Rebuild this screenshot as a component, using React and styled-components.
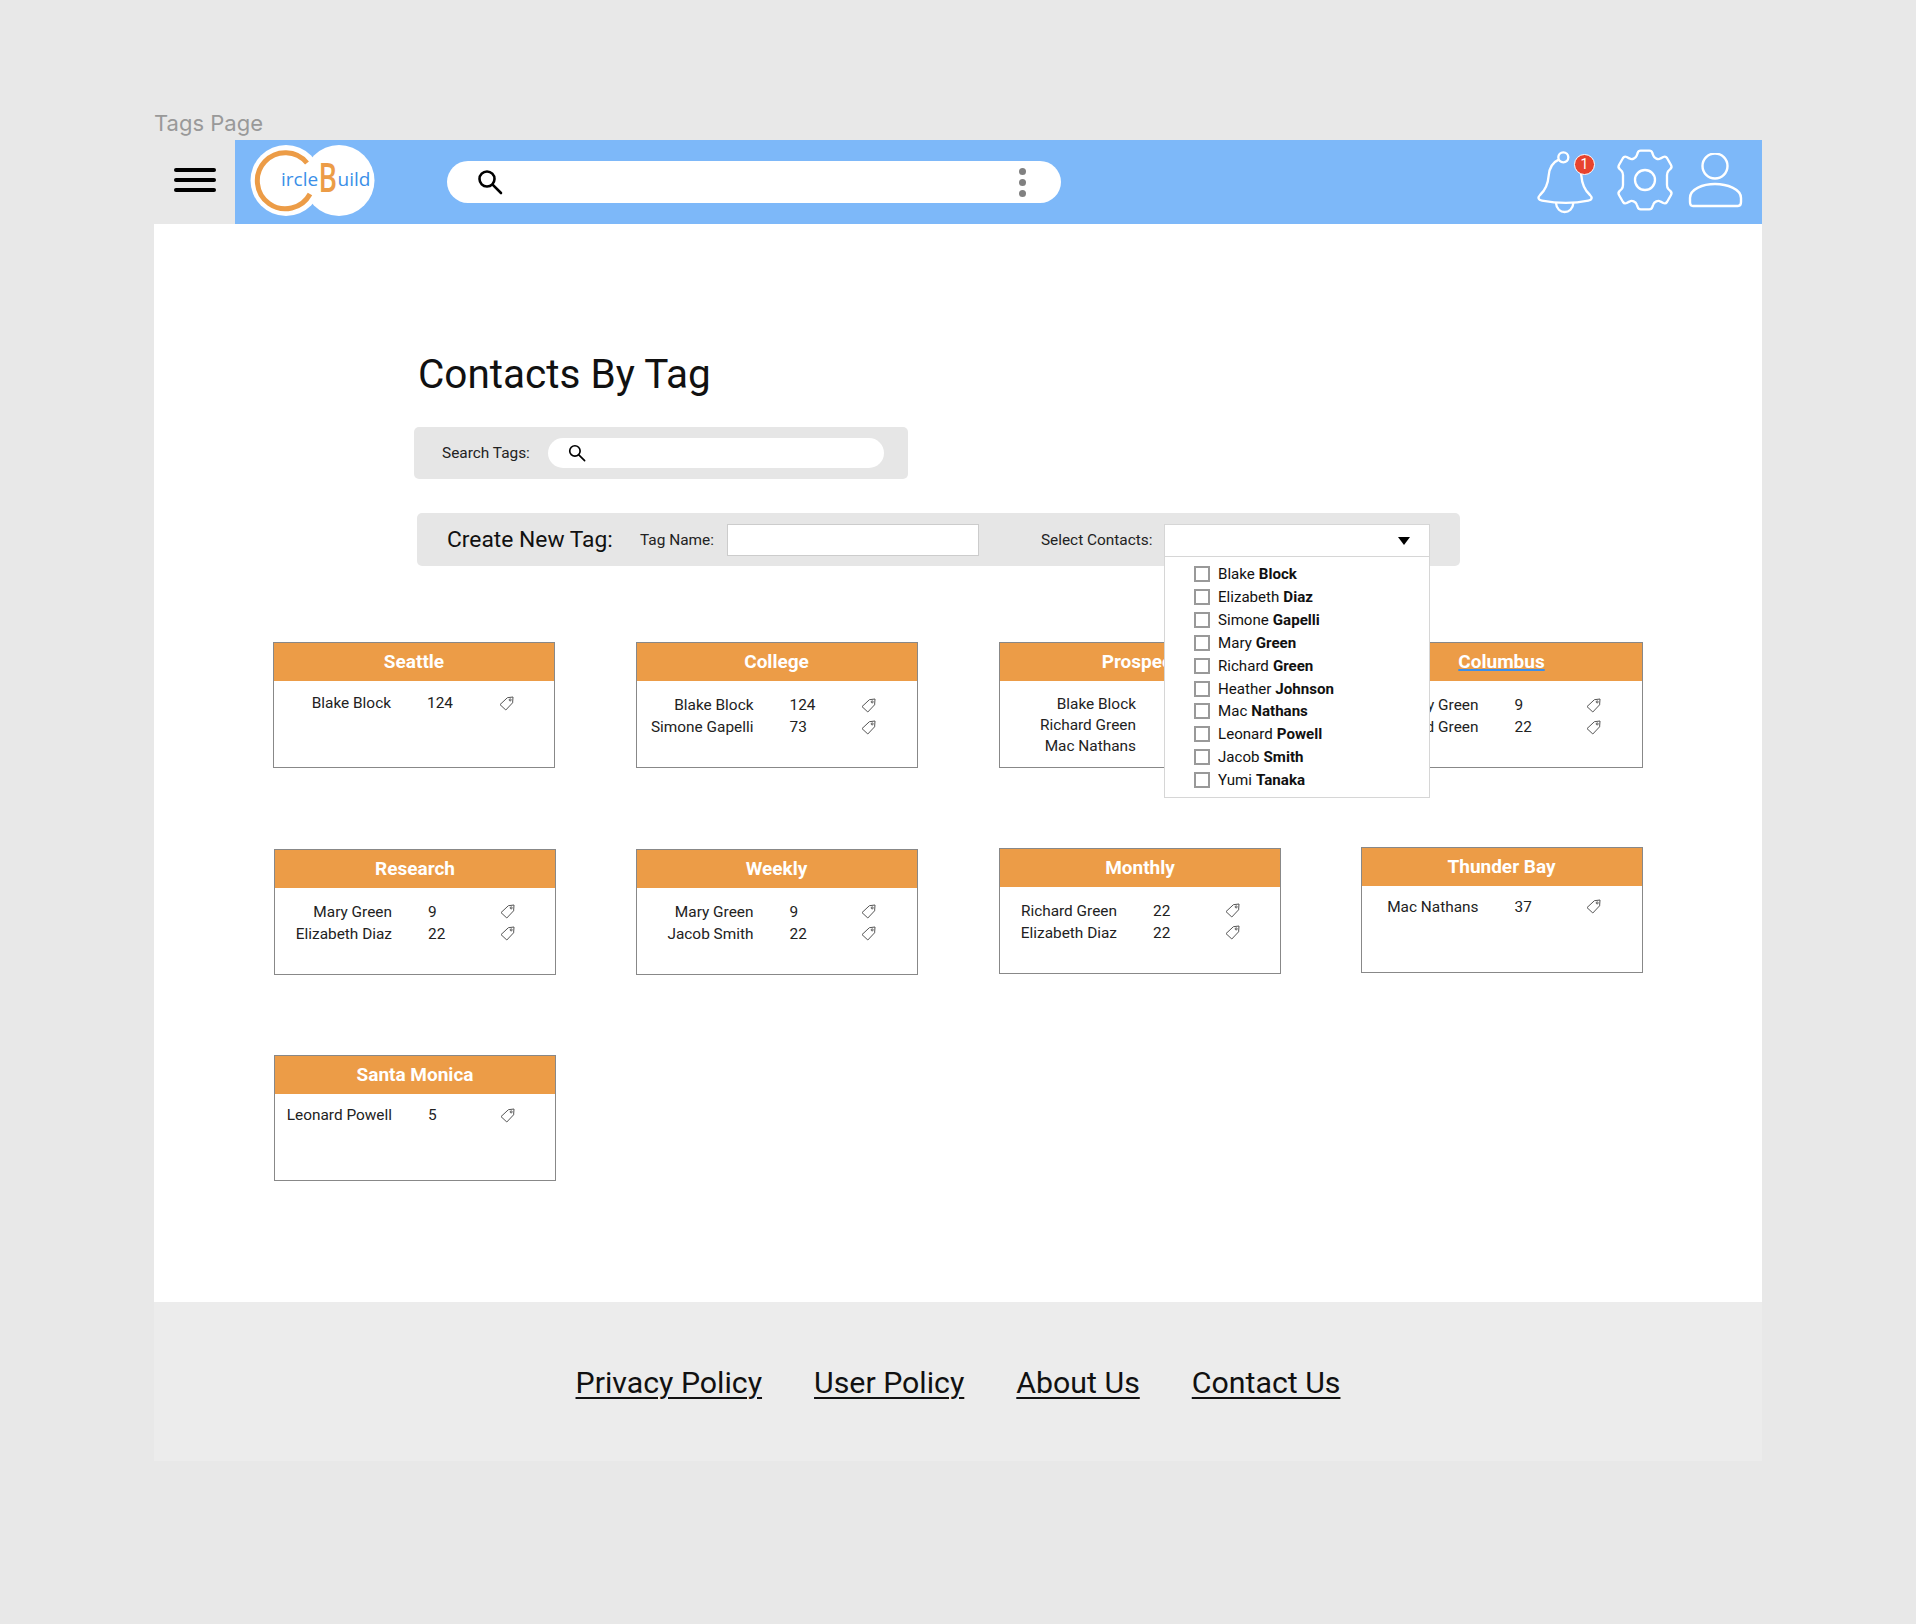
import React from "react";
import styled, { createGlobalStyle } from "styled-components";

const GlobalStyle = createGlobalStyle`
  html, body {
    margin: 0;
    padding: 0;
    background: #e8e8e8;
    font-family: Roboto, "Liberation Sans", sans-serif;
    color: #111;
  }
`;

const Page = styled.div`
  width: 1916px;
  height: 1624px;
  padding: 108px 154px 0;
  box-sizing: border-box;
`;

const PageLabel = styled.div`
  font-family: Inter, sans-serif;
  font-size: 22px;
  line-height: 31px;
  height: 32px;
  color: #999;
`;

const Frame = styled.div`
  width: 1608px;
  position: relative;
`;

const NavBar = styled.div`
  display: flex;
  height: 84px;
`;

const MenuCell = styled.div`
  width: 81px;
  display: flex;
  flex-direction: column;
  justify-content: center;
  align-items: center;
  gap: 6px;
  padding-bottom: 4px;
  box-sizing: border-box;
  background: #e8e8e8;
`;

const MenuBar = styled.span`
  display: block;
  width: 42px;
  height: 4px;
  border-radius: 2px;
  background: #000;
`;

const BlueBar = styled.div`
  flex: 1;
  display: flex;
  align-items: center;
  background: #7db8f9;
  padding-left: 15px;
`;

const LogoSvg = styled.svg`
  margin-top: -3px;
  flex-shrink: 0;
`;

const NavSearch = styled.div`
  width: 614px;
  height: 42px;
  margin-left: 72px;
  border-radius: 21px;
  background: #fff;
  display: flex;
  align-items: center;
  justify-content: space-between;
  padding: 0 35px 0 30px;
  box-sizing: border-box;
`;

const Kebab = styled.div`
  display: flex;
  flex-direction: column;
  gap: 4px;
`;

const KebabDot = styled.span`
  width: 7px;
  height: 7px;
  border-radius: 50%;
  background: #808080;
`;

const NavIcons = styled.div`
  margin-left: auto;
  display: flex;
  align-items: center;
  padding-right: 18px;
  gap: 13px;
`;

const BellWrap = styled.div`
  position: relative;
  width: 62px;
  height: 64px;
  margin-right: 5px;
`;

const Badge = styled.span`
  position: absolute;
  top: 4px;
  right: 2px;
  width: 21px;
  height: 21px;
  box-sizing: border-box;
  border: 1px solid #fff;
  border-radius: 50%;
  background: #e8432e;
  color: #fff;
  font-size: 14px;
  line-height: 19px;
  text-align: center;
`;

const Content = styled.main`
  height: 1078px;
  background: #fff;
  padding: 126px 0 0 119px;
  box-sizing: border-box;
`;

const Title = styled.h1`
  margin: 0 0 0 145px;
  font-size: 40.5px;
  font-weight: 400;
  line-height: 48px;
`;

const SearchPanel = styled.div`
  width: 494px;
  height: 52px;
  margin: 29px 0 0 141px;
  background: #e6e6e6;
  border-radius: 5px;
  display: flex;
  align-items: center;
  padding-left: 28px;
  box-sizing: border-box;
`;

const SmallLabel = styled.span`
  font-size: 15.4px;
  color: #222;
`;

const TagSearch = styled.div`
  width: 336px;
  height: 30px;
  margin-left: 18px;
  border-radius: 15px;
  background: #fff;
  display: flex;
  align-items: center;
  padding-left: 20px;
  box-sizing: border-box;
`;

const CreatePanel = styled.div`
  position: relative;
  width: 1043px;
  height: 53px;
  margin: 34px 0 0 144px;
  background: #e6e6e6;
  border-radius: 5px;
  display: flex;
  align-items: center;
  padding-left: 30px;
  box-sizing: border-box;
`;

const CreateLabel = styled.span`
  font-size: 22.8px;
  width: 193px;
  color: #111;
`;

const NameInput = styled.div`
  width: 252px;
  height: 32px;
  margin: 0 62px 0 13px;
  background: #fff;
  border: 1px solid #ccc;
  box-sizing: border-box;
`;

const Dropdown = styled.div`
  position: absolute;
  z-index: 2;
  left: 747px;
  top: 11px;
  width: 266px;
  background: #fff;
  border: 1px solid #d6d6d6;
  box-sizing: border-box;
`;

const DropHead = styled.div`
  height: 31px;
  border-bottom: 1px solid #d6d6d6;
  display: flex;
  align-items: center;
  justify-content: flex-end;
  padding-right: 19px;
`;

const Caret = styled.span`
  width: 0;
  height: 0;
  border-left: 6px solid transparent;
  border-right: 6px solid transparent;
  border-top: 8px solid #000;
`;

const DropList = styled.div`
  padding: 6px 0 6px 28.5px;
`;

const DropItem = styled.div`
  height: 22.85px;
  display: flex;
  align-items: center;
  font-size: 15.1px;
  color: #111;
  b {
    font-weight: 700;
    margin-left: 4px;
  }
`;

const CheckBox = styled.span`
  width: 16px;
  height: 16px;
  margin-right: 8.5px;
  border: 2px solid #999;
  box-sizing: border-box;
`;

const CardGrid = styled.div`
  margin-top: 76px;
  display: grid;
  grid-template-columns: repeat(4, 282px);
  column-gap: 80.5px;
  row-gap: 80.5px;
`;

const Card = styled.section`
  height: 126px;
  border: 1px solid #888;
  box-sizing: border-box;
  margin-top: ${(p) => p.$shift || 0}px;
  transform: translateX(${(p) => p.$nudge || 0}px);
  background: #fff;
`;

const CardHead = styled.div`
  height: 38px;
  background: #ec9c47;
  color: #fff;
  font-size: 19px;
  font-weight: 700;
  line-height: 38.5px;
  text-align: center;
`;

const Misspelt = styled.span`
  text-decoration: underline #3b8fe8 2px;
  text-underline-offset: 1px;
  text-decoration-skip-ink: none;
`;

const CardBody = styled.div`
  padding-top: ${(p) => p.$top}px;
  padding-left: ${(p) => p.$indent || 0}px;
`;

const CardRow = styled.div`
  height: ${(p) => p.$pitch}px;
  display: grid;
  grid-template-columns: 117px 36px 71.5px 15px;
  align-items: center;
  font-size: 15.4px;
  color: #222;
`;

const RowName = styled.span`
  text-align: right;
  white-space: nowrap;
  direction: rtl;
`;

const RowCount = styled.span`
  grid-column: 3;
`;

const Footer = styled.footer`
  height: 159px;
  padding-top: 1px;
  box-sizing: border-box;
  background: #ececec;
  display: flex;
  align-items: center;
  justify-content: center;
  gap: 52px;
`;

const FootLink = styled.a`
  font-size: 30.3px;
  color: #111;
  text-decoration: underline;
  text-underline-offset: 4px;
  text-decoration-thickness: 2px;
`;

const SearchIcon = ({ size, width }) => (
  <svg width={size} height={size} viewBox="0 0 26 26" fill="none" stroke="#000" strokeWidth={width}>
    <circle cx="10" cy="10" r="7.5" />
    <path d="M15.6 15.6 L24 24" strokeLinecap="round" />
  </svg>
);

const TagIcon = () => (
  <svg width="15" height="15" viewBox="0 0 15 15" fill="none" stroke="#555" strokeWidth="1" strokeLinejoin="round">
    <path d="M1 8.6 L8.4 1.7 L14 1 L13.6 6.8 L6.8 14 Z" />
    <circle cx="11.2" cy="3.9" r="1" />
  </svg>
);

const Logo = () => (
  <LogoSvg width="125" height="71" viewBox="0 0 125 71">
    <circle cx="36" cy="35.5" r="35.5" fill="#fff" />
    <circle cx="89" cy="35.5" r="35.5" fill="#fff" />
    <path d="M57 18 A28 28 0 1 0 60 49" fill="none" stroke="#ec9c47" strokeWidth="5" />
    <text x="31" y="41" fontFamily="Open Sans, sans-serif" fontSize="19" fill="#3b8fe8">ircle</text>
    <text transform="translate(68.5 47) scale(0.72 1)" fontFamily="Open Sans, sans-serif" fontSize="39" fontWeight="600" fill="#ec9c47">B</text>
    <text x="87.500" y="41" fontFamily="Open Sans, sans-serif" fontSize="19" fill="#3b8fe8">uild</text>
  </LogoSvg>
);

const BellIcon = () => (
  <svg width="62" height="64" viewBox="15 15 186 192" fill="none" stroke="#fff" strokeWidth="7" strokeLinejoin="round">
    <circle cx="100" cy="37" r="15" />
    <path d="M86 44 C68 52 58 70 56 92 C54 118 46 136 30 150 C22 158 25 165 36 167 C80 175 135 175 175 167 C186 165 188 158 180 150 C164 136 156 118 154 92 C153 78 149 66 142 56" />
    <path d="M78 174 C80 210 128 210 130 174" />
  </svg>
);

const UserIcon = () => (
  <svg width="56" height="58" viewBox="0 0 56 58" fill="none" stroke="#fff" strokeWidth="2.4">
    <circle cx="27" cy="13" r="12.5" />
    <path d="M2 45 C2 36 15 31 27 31 C39 31 53 36 53 45 L53 49 Q53 53 50 53 L5 53 Q2 53 2 49 Z" />
  </svg>
);

const GearIcon = () => (
  <svg width="60" height="60" viewBox="15 21 180 180" overflow="visible" fill="none" stroke="#fff" strokeWidth="7" strokeLinejoin="round">
    <path d="M92 17 L118 17 Q125 17 127 24 L130 32 Q132 38 139 41 Q146 44 152 40 L160 36 Q167 33 171 39 L183 60 Q187 67 181 72 L175 78 Q171 83 171 90 L171 120 Q171 127 175 132 L181 138 Q187 143 183 150 L171 171 Q167 177 160 174 L152 170 Q146 166 139 169 Q132 172 130 178 L127 186 Q125 193 118 193 L92 193 Q85 193 83 186 L80 178 Q78 172 71 169 Q64 166 58 170 L50 174 Q43 177 39 171 L27 150 Q23 143 29 138 L35 132 Q39 127 39 120 L39 90 Q39 83 35 78 L29 72 Q23 67 27 60 L39 39 Q43 33 50 36 L58 40 Q64 44 71 41 Q78 38 80 32 L83 24 Q85 17 92 17 Z" />
    <circle cx="105" cy="105" r="30" />
  </svg>
);

const cards = [
  { name: "Seattle", top: 11, pitch: 22, rows: [["Blake Block", "124"]] },
  { name: "College", top: 13, pitch: 22, rows: [["Blake Block", "124"], ["Simone Gapelli", "73"]] },
  { name: "Prospect", top: 12, pitch: 21, indent: 19, nudge: 1, rows: [["Blake Block", "124"], ["Richard Green", "22"], ["Mac Nathans", "37"]] },
  { name: "Columbus", top: 13, pitch: 22, misspelt: true, rows: [["Mary Green", "9"], ["Richard Green", "22"]] },
  { name: "Research", top: 13, pitch: 22, nudge: 1, rows: [["Mary Green", "9"], ["Elizabeth Diaz", "22"]] },
  { name: "Weekly", top: 13, pitch: 22, rows: [["Mary Green", "9"], ["Jacob Smith", "22"]] },
  { name: "Monthly", top: 13, pitch: 22, shift: -1, nudge: 1, rows: [["Richard Green", "22"], ["Elizabeth Diaz", "22"]] },
  { name: "Thunder Bay", top: 10, pitch: 22, shift: -2, rows: [["Mac Nathans", "37"]] },
  { name: "Santa Monica", top: 10, pitch: 22, nudge: 1, rows: [["Leonard Powell", "5"]] },
];

const contacts = [
  ["Blake", "Block"],
  ["Elizabeth", "Diaz"],
  ["Simone", "Gapelli"],
  ["Mary", "Green"],
  ["Richard", "Green"],
  ["Heather", "Johnson"],
  ["Mac", "Nathans"],
  ["Leonard", "Powell"],
  ["Jacob", "Smith"],
  ["Yumi", "Tanaka"],
];

const links = ["Privacy Policy", "User Policy", "About Us", "Contact Us"];

const App = () => (
  <Page>
    <GlobalStyle />
    <PageLabel>Tags Page</PageLabel>
    <Frame>
      <NavBar>
        <MenuCell>
          <MenuBar />
          <MenuBar />
          <MenuBar />
        </MenuCell>
        <BlueBar>
          <Logo />
          <NavSearch>
            <SearchIcon size={26} width={2.6} />
            <Kebab>
              <KebabDot />
              <KebabDot />
              <KebabDot />
            </Kebab>
          </NavSearch>
          <NavIcons>
            <BellWrap>
              <BellIcon />
              <Badge>1</Badge>
            </BellWrap>
            <GearIcon />
            <UserIcon />
          </NavIcons>
        </BlueBar>
      </NavBar>
      <Content>
        <Title>Contacts By Tag</Title>
        <SearchPanel>
          <SmallLabel>Search Tags:</SmallLabel>
          <TagSearch>
            <SearchIcon size={18} width={2.4} />
          </TagSearch>
        </SearchPanel>
        <CreatePanel>
          <CreateLabel>Create New Tag:</CreateLabel>
          <SmallLabel>Tag Name:</SmallLabel>
          <NameInput />
          <SmallLabel>Select Contacts:</SmallLabel>
          <Dropdown>
            <DropHead>
              <Caret />
            </DropHead>
            <DropList>
              {contacts.map(([first, last]) => (
                <DropItem key={first}>
                  <CheckBox />
                  {first}
                  <b>{last}</b>
                </DropItem>
              ))}
            </DropList>
          </Dropdown>
        </CreatePanel>
        <CardGrid>
          {cards.map((card) => (
            <Card key={card.name} $shift={card.shift} $nudge={card.nudge}>
              <CardHead>{card.misspelt ? <Misspelt>{card.name}</Misspelt> : card.name}</CardHead>
              <CardBody $top={card.top} $indent={card.indent}>
                {card.rows.map(([name, count]) => (
                  <CardRow key={name} $pitch={card.pitch}>
                    <RowName>{name}</RowName>
                    <RowCount>{count}</RowCount>
                    <TagIcon />
                  </CardRow>
                ))}
              </CardBody>
            </Card>
          ))}
        </CardGrid>
      </Content>
      <Footer>
        {links.map((link) => (
          <FootLink key={link}>{link}</FootLink>
        ))}
      </Footer>
    </Frame>
  </Page>
);

export default App;
